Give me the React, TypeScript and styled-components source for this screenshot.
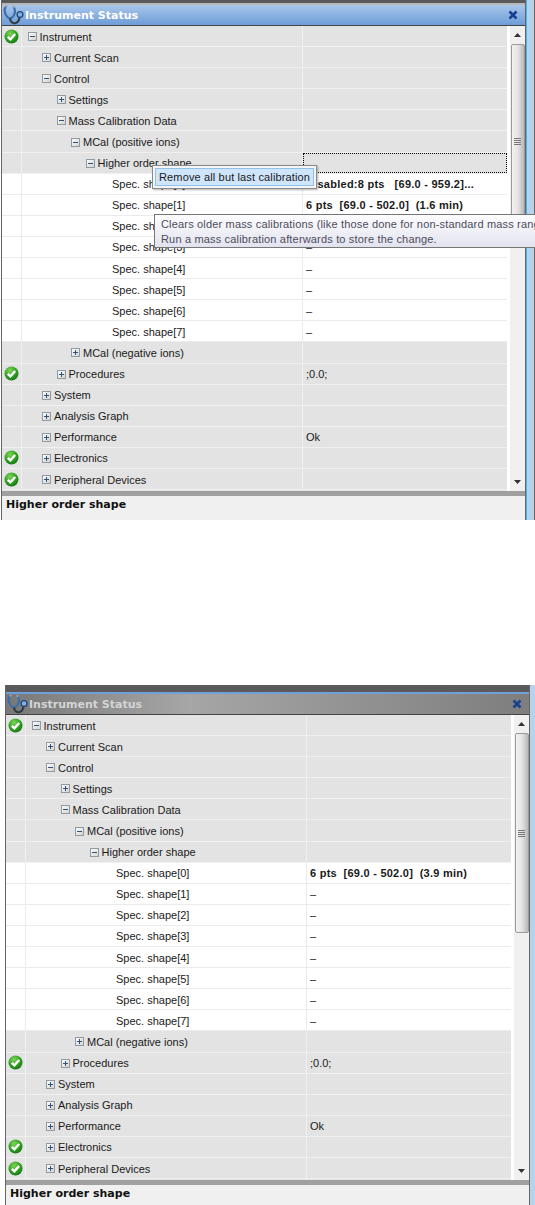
import React from 'react';
import styled, { createGlobalStyle } from 'styled-components';

const GlobalStyle = createGlobalStyle`
	html, body {
		margin: 0;
		padding: 0;
		background: #fff;
	}
`;

type RowData = {
	label: string;
	level: number;
	box?: 'plus' | 'minus';
	ok?: boolean;
	value?: string;
	bold?: boolean;
	leaf?: boolean;
	focus?: boolean;
};

const specRows = (values: string[]): RowData[] =>
	values.map((value, i) => ({
		label: `Spec. shape[${i}]`,
		level: 5,
		leaf: true,
		value,
		bold: value !== '–',
	}));

const buildRows = (values: string[], focus: boolean): RowData[] => [
	{ label: 'Instrument', level: 0, box: 'minus', ok: true },
	{ label: 'Current Scan', level: 1, box: 'plus' },
	{ label: 'Control', level: 1, box: 'minus' },
	{ label: 'Settings', level: 2, box: 'plus' },
	{ label: 'Mass Calibration Data', level: 2, box: 'minus' },
	{ label: 'MCal (positive ions)', level: 3, box: 'minus' },
	{ label: 'Higher order shape', level: 4, box: 'minus', focus },
	...specRows(values),
	{ label: 'MCal (negative ions)', level: 3, box: 'plus' },
	{ label: 'Procedures', level: 2, box: 'plus', ok: true, value: ';0.0;' },
	{ label: 'System', level: 1, box: 'plus' },
	{ label: 'Analysis Graph', level: 1, box: 'plus' },
	{ label: 'Performance', level: 1, box: 'plus', value: 'Ok' },
	{ label: 'Electronics', level: 1, box: 'plus', ok: true },
	{ label: 'Peripheral Devices', level: 1, box: 'plus', ok: true },
];

const firstValues = ['Disabled:8 pts   [69.0 - 959.2]...', '6 pts  [69.0 - 502.0]  (1.6 min)', '–', '–', '–', '–', '–', '–'];
const secondValues = ['6 pts  [69.0 - 502.0]  (3.9 min)', '–', '–', '–', '–', '–', '–', '–'];

const Stethoscope = () => (
	<svg width="21" height="20" viewBox="0 0 21 20" fill="none">
		<path d="M3.5 1.5 C0.5 3.5 1.5 8 3.5 11 C5.5 14 8.5 14 10.5 11 C12.5 8 12.5 4 10.5 2" stroke="#3f6ea8" strokeWidth="2.2" />
		<path d="M7 13.5 C7.5 18.5 12.5 19.5 15 16.5 C16.5 14.5 16.5 13 16.5 12" stroke="#333b46" strokeWidth="2.1" />
		<circle cx="17" cy="9.5" r="2.9" fill="#7fb0e6" stroke="#24456f" strokeWidth="1.3" />
		<circle cx="3.5" cy="1.6" r="1.2" fill="#9aa2ab" />
		<circle cx="10.5" cy="2" r="1.2" fill="#9aa2ab" />
	</svg>
);

const CloseIcon = () => (
	<svg width="10" height="10" viewBox="0 0 10 10">
		<path d="M1.5 1.5 L8.5 8.5 M8.5 1.5 L1.5 8.5" stroke="#17418f" strokeWidth="2.6" />
	</svg>
);

const OkIcon = () => (
	<svg width="15" height="15" viewBox="0 0 15 15">
		<defs>
			<radialGradient id="okFill" cx="40%" cy="30%" r="75%">
				<stop offset="0%" stopColor="#7fd45a" />
				<stop offset="60%" stopColor="#2f9e22" />
				<stop offset="100%" stopColor="#147312" />
			</radialGradient>
		</defs>
		<circle cx="7.5" cy="7.5" r="7" fill="url(#okFill)" />
		<path d="M3.8 7.8 L6.4 10.3 L11.2 5" stroke="#fff" strokeWidth="2.4" fill="none" />
	</svg>
);

const ExpandBox = ({ kind }: { kind: 'plus' | 'minus' }) => (
	<svg width="9" height="9" viewBox="0 0 9 9">
		<defs>
			<linearGradient id="boxFill" x1="0" y1="0" x2="1" y2="1">
				<stop offset="0%" stopColor="#ffffff" />
				<stop offset="100%" stopColor="#d0d0cc" />
			</linearGradient>
		</defs>
		<rect x="0.5" y="0.5" width="8" height="8" fill="url(#boxFill)" stroke="#8f9aa5" />
		<path d="M2 4.5 H7" stroke="#33507a" />
		{kind === 'plus' && <path d="M4.5 2 V7" stroke="#33507a" />}
	</svg>
);

const ArrowUp = () => (
	<svg width="7" height="4" viewBox="0 0 7 4">
		<path d="M3.5 0 L7 4 H0 Z" fill="#333" />
	</svg>
);

const ArrowDown = () => (
	<svg width="7" height="4" viewBox="0 0 7 4">
		<path d="M0 0 H7 L3.5 4 Z" fill="#333" />
	</svg>
);

const Grip = () => (
	<svg width="7" height="7" viewBox="0 0 7 7">
		<path d="M0 0.5 H7 M0 2.5 H7 M0 4.5 H7 M0 6.5 H7" stroke="#777" />
	</svg>
);

type PanelProps = {
	rows: RowData[];
	inactive?: boolean;
	thumbHeight: number;
	children?: React.ReactNode;
};

const StatusPanel = ({ rows, inactive, thumbHeight, children }: PanelProps) => (
	<Panel>
		<TopStrip $inactive={inactive} />
		<TitleBar $inactive={inactive}>
			<TitleIcon>
				<Stethoscope />
			</TitleIcon>
			<TitleText $inactive={inactive}>Instrument Status</TitleText>
			<CloseIcon />
		</TitleBar>
		<Body>
			<Tree>
				{rows.map((row) => (
					<Row key={row.label} $leaf={row.leaf}>
						<StatusCell $leaf={row.leaf}>{row.ok && <OkIcon />}</StatusCell>
						<NameCell $level={row.level} $leaf={row.leaf}>
							{row.box && <ExpandBox kind={row.box} />}
							<span>{row.label}</span>
						</NameCell>
						<ValueCell $bold={row.bold} $focus={row.focus}>
							{row.value}
						</ValueCell>
					</Row>
				))}
			</Tree>
			<Scrollbar>
				<ScrollButton>
					<ArrowUp />
				</ScrollButton>
				<ScrollThumb $height={thumbHeight}>
					<Grip />
				</ScrollThumb>
				<ScrollRest />
				<ScrollButton>
					<ArrowDown />
				</ScrollButton>
			</Scrollbar>
		</Body>
		<Splitter />
		<StatusArea>Higher order shape</StatusArea>
		<SideStrip $inactive={inactive} />
		{children}
	</Panel>
);

export default function App() {
	return (
		<>
			<GlobalStyle />
			<Page>
				<FirstShot>
					<StatusPanel rows={buildRows(firstValues, true)} thumbHeight={195}>
						<ContextMenu>
							<MenuItem>Remove all but last calibration</MenuItem>
						</ContextMenu>
						<Tooltip>
							<div>Clears older mass calibrations (like those done for non-standard mass ranges).</div>
							<div>Run a mass calibration afterwards to store the change.</div>
						</Tooltip>
					</StatusPanel>
				</FirstShot>
				<SecondShot>
					<StatusPanel rows={buildRows(secondValues, false)} inactive thumbHeight={200} />
				</SecondShot>
			</Page>
		</>
	);
}

const Page = styled.div`
	width: 535px;
	height: 1205px;
	overflow: hidden;
	font-family: 'Liberation Sans', Arial, sans-serif;
	font-size: 11px;
	color: #1a1a1a;
`;

const FirstShot = styled.div`
	height: 520px;
	padding-left: 1px;
`;

const SecondShot = styled.div`
	height: 520px;
	margin-top: 165px;
	padding-left: 5px;
`;

const Panel = styled.div`
	position: relative;
	height: 100%;
	display: flex;
	flex-direction: column;
	border-left: 1px solid #666;
	box-sizing: border-box;
`;

const TopStrip = styled.div<{ $inactive?: boolean }>`
	height: ${(p) => (p.$inactive ? '9px' : '5px')};
	width: 523px;
	flex: none;
	box-sizing: border-box;
	background: #5a5a5a;
	border-bottom: ${(p) => (p.$inactive ? '2px solid #6fa0dc' : '2px solid #b8b8b8')};
`;

const TitleBar = styled.div<{ $inactive?: boolean }>`
	height: 21px;
	flex: none;
	width: 523px;
	box-sizing: border-box;
	display: flex;
	align-items: center;
	padding-right: 7px;
	border-bottom: 1px solid #444;
	background: ${(p) =>
		p.$inactive ? 'linear-gradient(to right, #787878, #a6a6a6 35%, #7e7e7e)' : 'linear-gradient(to bottom, #a9c6ea, #6e9dd8)'};
`;

const TitleIcon = styled.div`
	width: 23px;
	flex: none;
	display: flex;
	justify-content: center;
`;

const TitleText = styled.div<{ $inactive?: boolean }>`
	flex: 1;
	font-family: 'DejaVu Sans', sans-serif;
	font-weight: 700;
	font-size: 11px;
	color: ${(p) => (p.$inactive ? '#d4d4d4' : '#fff')};
`;

const Body = styled.div`
	flex: none;
	height: 465px;
	width: 523px;
	display: flex;
`;

const Tree = styled.div`
	width: 505px;
	flex: none;
	display: flex;
	flex-direction: column;
	background: #e3e3e3;
`;

const Row = styled.div<{ $leaf?: boolean }>`
	height: 21.1px;
	box-sizing: border-box;
	display: grid;
	grid-template-columns: 20px 281px 1fr;
	border-bottom: 1px solid ${(p) => (p.$leaf ? '#ebebeb' : '#f0f0f0')};
	background: ${(p) => (p.$leaf ? '#fff' : '#e3e3e3')};
`;

const StatusCell = styled.div<{ $leaf?: boolean }>`
	display: flex;
	align-items: center;
	justify-content: center;
	border-right: 1px solid ${(p) => (p.$leaf ? '#ebebeb' : '#f0f0f0')};
`;

const NameCell = styled.div<{ $level: number; $leaf?: boolean }>`
	display: flex;
	align-items: center;
	gap: 3px;
	padding-top: 1px;
	padding-left: ${(p) => (p.$leaf ? 90 : 5.5 + p.$level * 14.5)}px;
	border-right: 1px solid ${(p) => (p.$leaf ? '#ebebeb' : '#f0f0f0')};
	white-space: nowrap;
`;

const ValueCell = styled.div<{ $bold?: boolean; $focus?: boolean }>`
	display: flex;
	align-items: center;
	padding-top: 1px;
	padding-left: 3px;
	white-space: pre;
	font-weight: ${(p) => (p.$bold ? 700 : 400)};
	letter-spacing: ${(p) => (p.$bold ? '0.25px' : '0')};
	outline: ${(p) => (p.$focus ? '1px dotted #000' : 'none')};
	outline-offset: -1px;
`;

const Scrollbar = styled.div`
	flex: 1;
	display: flex;
	flex-direction: column;
	align-items: center;
	background: #f0f0f0;
	border-left: 3px solid #fff;
`;

const ScrollButton = styled.div`
	height: 18px;
	flex: none;
	display: flex;
	align-items: center;
	justify-content: center;
`;

const ScrollThumb = styled.div<{ $height: number }>`
	width: 14px;
	height: ${(p) => p.$height}px;
	flex: none;
	box-sizing: border-box;
	display: flex;
	align-items: center;
	justify-content: center;
	border: 1px solid #9a9a9a;
	border-radius: 2px;
	background: linear-gradient(to right, #f2f2f2, #e4e4e4 50%, #b8b8b8);
`;

const ScrollRest = styled.div`
	flex: 1;
`;

const Splitter = styled.div`
	height: 5px;
	flex: none;
	width: 523px;
	background: #a0a0a0;
`;

const StatusArea = styled.div`
	flex: 1;
	width: 523px;
	padding: 2px 4px;
	box-sizing: border-box;
	font-family: 'DejaVu Sans', sans-serif;
	font-weight: 700;
	font-size: 11px;
	color: #111;
	background: #f0f0f0;
`;

const SideStrip = styled.div<{ $inactive?: boolean }>`
	position: absolute;
	top: 0;
	left: 523px;
	bottom: 0;
	width: ${(p) => (p.$inactive ? '12px' : '8px')};
	background: #b9d2ec;
	border-left: 1px solid #666;
	border-right: 1px solid #666;
	box-shadow: ${(p) => (p.$inactive ? 'none' : 'inset 1px 0 0 #3fb8e8')};
`;

const ContextMenu = styled.div`
	position: absolute;
	left: 150px;
	top: 165px;
	padding: 2px;
	border: 1px solid #8a8a8a;
	background: #f5f5f5;
	box-shadow: 1px 1px 2px rgba(0, 0, 0, 0.3);
`;

const MenuItem = styled.div`
	height: 16px;
	line-height: 16px;
	padding: 0 3px;
	white-space: nowrap;
	letter-spacing: 0.14px;
	color: #1a1a1a;
	border: 1px solid #8fc0ee;
	background: #cfe5fb;
`;

const Tooltip = styled.div`
	position: absolute;
	left: 152px;
	top: 214px;
	width: 430px;
	height: 34px;
	padding: 2px 6px;
	box-sizing: border-box;
	line-height: 15px;
	white-space: nowrap;
	letter-spacing: 0.17px;
	color: #4c4c5c;
	border: 1px solid #767676;
	background: linear-gradient(to bottom, #fdfdfe, #e2e3ef);
`;
